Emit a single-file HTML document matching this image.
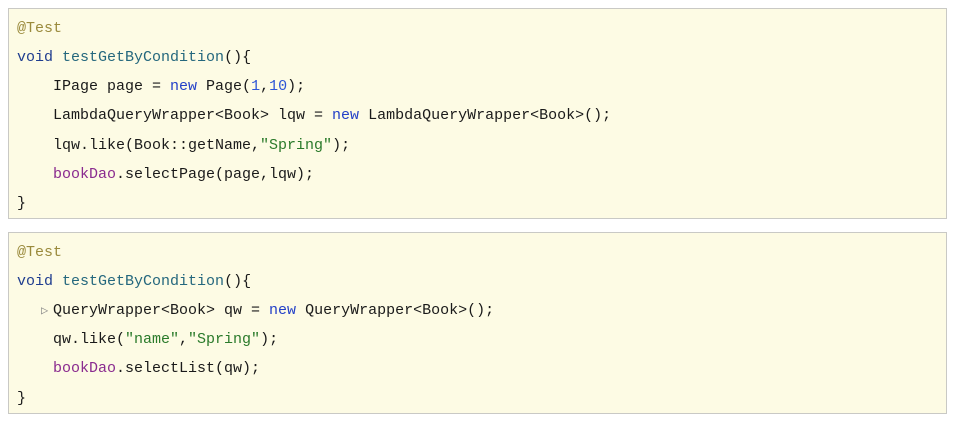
<!DOCTYPE html>
<html><head><style>
body{margin:0;background:#fff;width:963px;height:422px;overflow:hidden;position:relative;font-family:"Liberation Mono",monospace;font-size:15px;color:#1a1a1a}
.box{position:absolute;left:8px;width:939px;background:#fdfbe4;border:1px solid #c9c9c5;box-sizing:border-box}
.l{position:absolute;white-space:pre;line-height:18px}
.a{color:#9a8a3c}.k{color:#1f3d8f}.m{color:#24677d}.n{color:#2340c8}.s{color:#2a7a2a}.p{color:#8a2b8f}.num{color:#2d55d6}
</style></head><body>
<div class="box" style="top:8px;height:211px"></div>
<div class="box" style="top:232px;height:182px"></div>
<div class="l a" style="left:17px;top:20px">@Test</div>
<div class="l" style="left:17px;top:49px"><span class="k">void</span> <span class="m">testGetByCondition</span>(){</div>
<div class="l" style="left:53px;top:78px">IPage page = <span class="n">new</span> Page(<span class="num">1</span>,<span class="num">10</span>);</div>
<div class="l" style="left:53px;top:107px">LambdaQueryWrapper&lt;Book&gt; lqw = <span class="n">new</span> LambdaQueryWrapper&lt;Book&gt;();</div>
<div class="l" style="left:53px;top:137px">lqw.like(Book::getName,<span class="s">"Spring"</span>);</div>
<div class="l" style="left:53px;top:166px"><span class="p">bookDao</span>.selectPage(page,lqw);</div>
<div class="l" style="left:17px;top:195px">}</div>
<div class="l a" style="left:17px;top:244px">@Test</div>
<div class="l" style="left:17px;top:273px"><span class="k">void</span> <span class="m">testGetByCondition</span>(){</div>
<div class="l" style="left:41px;top:302px;color:#888;font-size:12px">&#9655;</div>
<div class="l" style="left:53px;top:302px">QueryWrapper&lt;Book&gt; qw = <span class="n">new</span> QueryWrapper&lt;Book&gt;();</div>
<div class="l" style="left:53px;top:331px">qw.like(<span class="s">"name"</span>,<span class="s">"Spring"</span>);</div>
<div class="l" style="left:53px;top:360px"><span class="p">bookDao</span>.selectList(qw);</div>
<div class="l" style="left:17px;top:390px">}</div>
</body></html>
